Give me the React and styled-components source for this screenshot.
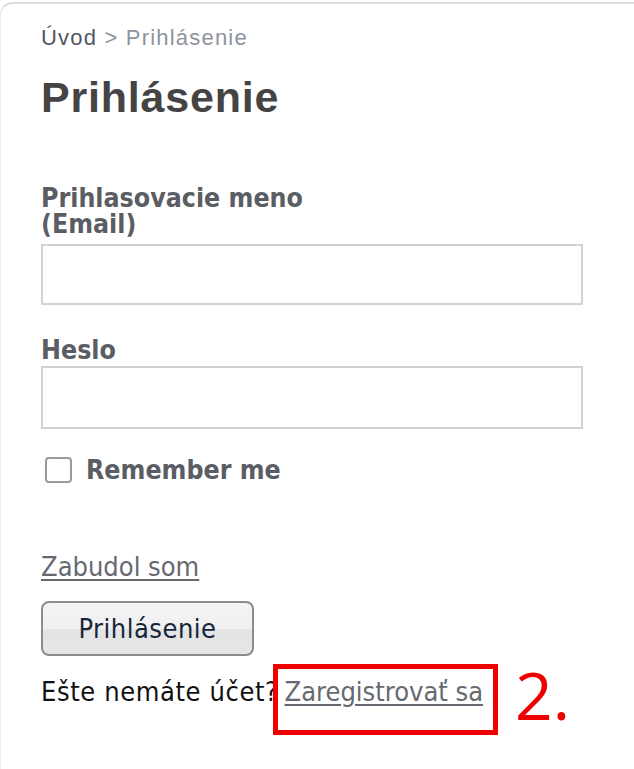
import React from "react";
import styled, { createGlobalStyle } from "styled-components";

const Global = createGlobalStyle`
  html, body { margin: 0; padding: 0; background: #fff; }
  body { font-family: "Liberation Sans", Arial, sans-serif; }
`;

const condensed = `"Liberation Sans Narrow", "DejaVu Sans Condensed", "Liberation Sans", sans-serif`;

const Panel = styled.div`
  margin-top: 2px;
  min-height: 767px;
  box-sizing: border-box;
  border-top: 2px solid #dcdcdc;
  border-left: 2px solid #ececec;
  border-top-left-radius: 14px;
  margin-left: -1px;
  padding: 22px 0 0 40px;
`;

const Breadcrumb = styled.div`
  font-family: "Liberation Sans", Arial, sans-serif;
  font-size: 22px;
  letter-spacing: 1.2px;
  line-height: 24px;
  color: #8e949c;
`;

const Crumb = styled.span`
  color: ${(p) => (p.$active ? "#505764" : "#8e949c")};
`;

const Title = styled.h1`
  margin: 22px 0 0;
  font-family: "Liberation Sans", Arial, sans-serif;
  font-size: 43px;
  letter-spacing: 0.8px;
  line-height: 50px;
  font-weight: bold;
  color: #444;
`;

const Form = styled.form`
  margin-top: 63px;
  display: flex;
  flex-direction: column;
  align-items: flex-start;
`;

const Label = styled.label`
  display: flex;
  flex-direction: column;
  font-family: ${condensed};
  font-weight: bold;
  font-size: 26.5px;
  line-height: 26px;
  color: #5a5d63;
  margin-top: ${(p) => p.$gap || 0}px;
`;

const LabelLine = styled.span`
  display: block;
  height: 26px;
`;

const Input = styled.input`
  display: block;
  box-sizing: border-box;
  width: 542px;
  height: ${(p) => p.$h}px;
  margin-top: ${(p) => p.$gap}px;
  border: 2px solid #d2d2d2;
  background: #fff;
  outline: none;
  padding: 0 8px;
  font-size: 20px;
`;

const CheckRow = styled.label`
  display: flex;
  align-items: center;
  gap: 14px;
  margin: 27px 0 0 4px;
  font-family: ${condensed};
  font-weight: bold;
  font-size: 26.5px;
  line-height: 28px;
  color: #5a5d63;
`;

const Box = styled.span`
  display: inline-block;
  box-sizing: border-box;
  width: 27px;
  height: 26px;
  border: 2px solid #9a9a9a;
  border-radius: 4px;
  background: #fff;
`;

const Link = styled.a`
  font-family: ${condensed};
  font-size: 27px;
  letter-spacing: 0;
  color: #666a70;
  text-decoration: underline;
  text-underline-offset: 3px;
  cursor: pointer;
`;

const ForgotRow = styled.div`
  margin-top: 68px;
  line-height: 30px;
`;

const Button = styled.button`
  margin-top: 15px;
  box-sizing: border-box;
  width: 213px;
  height: 55px;
  border: 2px solid #8c8c8c;
  border-radius: 8px;
  background: linear-gradient(#f4f4f4, #f0f0f0 50%, #e4e4e4 52%, #e6e6e6);
  font-family: ${condensed};
  font-size: 27px;
  color: #16253a;
  letter-spacing: 0.5px;
  padding: 0;
`;

const RegisterRow = styled.div`
  margin-top: 18px;
  font-family: ${condensed};
  font-size: 27px;
  letter-spacing: 0.6px;
  line-height: 36px;
  color: #111;
`;

const Marked = styled.span`
  position: relative;
  margin-left: 6px;
`;

const RedBox = styled.span`
  position: absolute;
  left: -12px;
  right: -15px;
  top: -12px;
  bottom: -28px;
  border: 5px solid #ee0000;
  pointer-events: none;
`;

const Step = styled.span`
  position: absolute;
  left: calc(100% + 32px);
  top: -15px;
  font-family: "Open Sans", "Noto Sans", sans-serif;
  font-size: 66px;
  letter-spacing: 0;
  line-height: 66px;
  color: #ee0000;
  white-space: nowrap;
`;

export default function App() {
  return (
    <>
      <Global />
      <Panel>
        <Breadcrumb>
          <Crumb $active>Úvod</Crumb> &gt; Prihlásenie
        </Breadcrumb>
        <Title>Prihlásenie</Title>
        <Form onSubmit={(e) => e.preventDefault()}>
          <Label>
            <LabelLine>Prihlasovacie meno</LabelLine>
            <LabelLine>(Email)</LabelLine>
          </Label>
          <Input type="text" $h={61} $gap={7} />
          <Label $gap={32}>Heslo</Label>
          <Input type="password" $h={63} $gap={3} />
          <CheckRow>
            <Box />
            Remember me
          </CheckRow>
          <ForgotRow>
            <Link>Zabudol som</Link>
          </ForgotRow>
          <Button type="submit">Prihlásenie</Button>
          <RegisterRow>
            Ešte nemáte účet?
            <Marked>
              <Link>Zaregistrovať sa</Link>
              <RedBox />
              <Step>2.</Step>
            </Marked>
          </RegisterRow>
        </Form>
      </Panel>
    </>
  );
}
